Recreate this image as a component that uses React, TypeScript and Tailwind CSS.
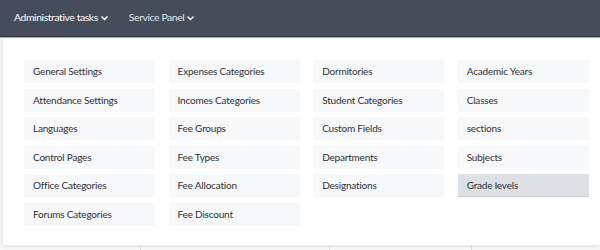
import React from "react";

const cols: string[][] = [
  ["General Settings", "Attendance Settings", "Languages", "Control Pages", "Office Categories", "Forums Categories"],
  ["Expenses Categories", "Incomes Categories", "Fee Groups", "Fee Types", "Fee Allocation", "Fee Discount"],
  ["Dormitories", "Student Categories", "Custom Fields", "Departments", "Designations"],
  ["Academic Years", "Classes", "sections", "Subjects", "Grade levels"],
];

function Chevron() {
  return (
    <svg width="7" height="5" viewBox="0 0 8 6" className="ml-[3px] mt-[1px]">
      <path d="M1 1.2 L4 4.2 L7 1.2" fill="none" stroke="currentColor" strokeWidth="2" strokeLinecap="round" strokeLinejoin="round" />
    </svg>
  );
}

export default function App() {
  return (
    <div className="w-[600px] h-[250px] overflow-hidden bg-[#f4f5f7] relative" style={{ fontFamily: "Lato, 'Open Sans', sans-serif" }}>
      <div className="h-[37px] bg-[#454c5a] border-b border-[#2f3542] flex items-center pl-[14px] text-[10.4px] tracking-[-0.4px]">
        <div className="flex items-center text-white">Administrative tasks<Chevron /></div>
        <div className="flex items-center text-[#e3e5ea] ml-[21px]">Service Panel<Chevron /></div>
      </div>
      <div className="h-[1px] bg-[#a8adb6]" />
      <div className="flex">
        <div className="w-[3px] bg-[#f4f5f7]" />
        <div className="flex-1 h-[207px] bg-white shadow-[0_1px_4px_rgba(0,0,0,0.12)] pt-[22px] pl-[21px] pr-[11px]">
          <div className="grid grid-cols-4 gap-x-[13.3px]">
            {cols.map((col, ci) => (
              <div key={ci} className="flex flex-col gap-y-[5.6px]">
                {col.map((t) => (
                  <div
                    key={t}
                    className={
                      "h-[23px] flex items-center pl-[9px] text-[10px] tracking-[-0.2px] text-[#2d3035] rounded-[1px] " +
                      (t === "Grade levels" ? "bg-[#dce0e4] border-b border-[#c9ced4]" : "bg-[#f7f8fa]")
                    }
                  >
                    {t}
                  </div>
                ))}
              </div>
            ))}
          </div>
        </div>
      </div>
      <div className="flex h-[5px] bg-[#f7f8fa]">
        <div className="w-[141px] border-r border-[#dcdcdc]" />
        <div className="w-[189px] border-r border-[#dcdcdc]" />
        <div className="w-[142px] border-r border-[#dcdcdc]" />
      </div>
    </div>
  );
}
